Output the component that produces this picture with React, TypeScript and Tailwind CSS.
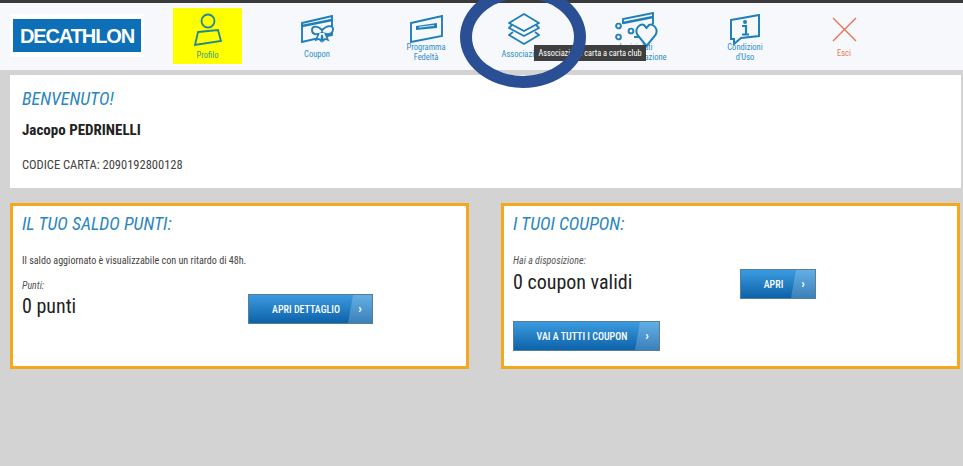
function NavItem({ label, icon, width, tone = "text-[#2f8fc7]", gap }: { label: React.ReactNode; icon: React.ReactNode; width: string; tone?: string; gap: string }) {
  return (
    <div className={`flex h-full shrink-0 flex-col items-center pt-[10px] text-center text-[8.5px] leading-[10px] ${width} ${tone}`}>
      <div className="flex h-[32px] items-center justify-center">{icon}</div>
      <div className={gap}>{label}</div>
    </div>
  );
}

function CouponIcon() {
  return (
    <svg width="33" height="28" viewBox="0 0 33 28" fill="none" stroke="#1f7fb8" strokeWidth="1.9">
      <path d="M1 8 L31 1 V20 L1 27 Z" />
      <path d="M1 11 L31 5" strokeWidth="2.8" />
      <path d="M21 15 C16 10 11 11 11 15 C11 20 16 20 21 18 C26 20 32 20 32 14 C32 10 26 10 21 15 Z" fill="#f6f8fb" />
      <path d="M21 15 V18 M18 18 L15 25 L18 24 L20 26 L21 20 L22 26 L24 24 L27 25 L24 18" fill="#f6f8fb" strokeWidth="1.6" />
    </svg>
  );
}

function CardIcon() {
  return (
    <svg width="33" height="28" viewBox="0 0 33 28" fill="none" stroke="#1f7fb8" strokeWidth="1.9">
      <path d="M1 8 L32 1 V21 L1 27 Z" />
      <path d="M6 11 L27 8 V13 L6 15 Z" fill="#1f7fb8" stroke="none" />
      <path d="M9 12.2 L24 10.4" stroke="#dcecf6" strokeWidth="1" />
    </svg>
  );
}

function LayersIcon() {
  return (
    <svg width="34" height="32" viewBox="0 0 34 32" fill="none" stroke="#1f7fb8" strokeWidth="1.8" strokeLinejoin="round">
      <path d="M17 1 L32 10 L17 18 L2 10 Z" />
      <path d="M5 12 L2 15 L17 23 L32 15 L29 12" />
      <path d="M6 19 L2 22 L17 31 L32 22 L28 19" />
      <path d="M9 14 L17 18 L25 14" strokeWidth="1" />
    </svg>
  );
}

function RewardIcon() {
  return (
    <svg width="43" height="35" viewBox="0 0 43 35" fill="none" stroke="#1f7fb8" strokeWidth="1.9">
      <path d="M8 12 V7 L38 1 V12" />
      <path d="M8 11 L38 5" strokeWidth="2.8" />
      <path d="M19 25 H24" />
      <circle cx="3.5" cy="14" r="2.4" />
      <circle cx="3.5" cy="25" r="2.4" />
      <circle cx="16" cy="19" r="2.4" />
      <path d="M31.5 34 L22.5 23 C19 17 25 11 29 13 L31.5 16 L34 13 C38 11 44 17 40.5 23 Z" fill="#f6f8fb" strokeWidth="2" />
    </svg>
  );
}

function InfoIcon() {
  return (
    <svg width="30" height="31" viewBox="0 0 30 31" fill="none" stroke="#1f7fb8" strokeWidth="2">
      <path d="M1 6 L29 1 V22 L11 24 L4 30 V25 H1 Z" />
      <circle cx="15" cy="8" r="2" fill="#1f7fb8" stroke="none" />
      <path d="M12 12 H16 V20 M12 20.5 H19" strokeWidth="2.2" />
    </svg>
  );
}

function Cta({ label, className }: { label: string; className: string }) {
  return (
    <div className={`relative flex h-[30px] items-center overflow-hidden border border-[#5a7d96] bg-gradient-to-b from-[#3b9be0] to-[#0a62a8] text-[10px] font-medium text-white ${className}`}>
      <span className="flex-1 pl-[15px] text-center">{label}</span>
      <span className="flex h-full w-[24px] items-center justify-center bg-white/20 [clip-path:polygon(5px_0,100%_0,100%_100%,0_100%)] text-[13px] font-bold">›</span>
    </div>
  );
}

export default function App() {
  return (
    <div className="relative h-[466px] w-[963px] overflow-hidden bg-[#d3d3d3] font-['Roboto_Condensed','Roboto',sans-serif] [font-stretch:75%]">
      <div className="h-[3px] bg-[#3a3a3a]" />
      <header className="flex h-[67px] items-start bg-[#f6f8fb]">
        <div className="ml-[10px] mt-[11px] bg-white px-[3px] py-[5px]">
          <div className="flex h-[33px] w-[128px] items-center justify-center bg-[#0d6fb8] font-['Liberation_Sans',sans-serif] text-[20px] font-bold tracking-[-1.1px] text-white">
            DECATHLON
          </div>
        </div>
        <div className="ml-[29px] mt-[5px] flex h-[56px] w-[69px] flex-col items-center bg-[#ffff00] pt-[5px] text-[8.5px] text-[#3a9a86]">
          <svg width="28" height="33" viewBox="0 0 28 33" fill="none" stroke="#1f8a8f" strokeWidth="1.8">
            <circle cx="14" cy="8" r="6.5" />
            <path d="M4 19 L24 17 L27 28 L1 32 Z" />
          </svg>
          <span className="mt-[3px]">Profilo</span>
        </div>
        <div className="ml-[20px] flex h-full">
          <NavItem width="w-[110px]" gap="mt-[4px]" label="Coupon" icon={<CouponIcon />} />
          <NavItem width="w-[108px]" gap="mt-[-3px]" label={<>Programma<br />Fedeltà</>} icon={<CardIcon />} />
          <NavItem width="w-[88px]" gap="mt-[4px]" label="Associazione" icon={<LayersIcon />} />
          <NavItem width="w-[136px]" gap="mt-[-3px]" label={<>I miei dati<br />Personalizzazione</>} icon={<RewardIcon />} />
          <NavItem width="w-[82px]" gap="mt-[-3px]" label={<>Condizioni<br />d'Uso</>} icon={<InfoIcon />} />
          <NavItem
            width="w-[116px]"
            gap="mt-[3px]"
            label="Esci"
            tone="text-[#e8795a]"
            icon={
              <svg width="25" height="25" viewBox="0 0 25 25" stroke="#e8704f" strokeWidth="1.3">
                <path d="M1 1 L24 24 M24 1 L1 24" />
              </svg>
            }
          />
        </div>
      </header>

      <main className="flex flex-col gap-[15px] pl-[10px] pr-[2px] pt-[5px]">
        <section className="h-[113px] bg-white px-[12px] pt-[13px]">
          <h2 className="text-[18px] leading-[22px] italic text-[#2a86c0]">BENVENUTO!</h2>
          <p className="mt-[10px] text-[15px] leading-[20px] font-bold text-[#222]">Jacopo PEDRINELLI</p>
          <p className="mt-[17px] text-[12.5px] leading-[16px] text-[#444]">CODICE CARTA: 2090192800128</p>
        </section>

        <div className="flex gap-[32px]">
          <section className="h-[166px] w-[459px] border-[3px] border-[#f6a81d] bg-white px-[9px] pt-[5px]">
            <h2 className="text-[18px] leading-[26px] italic text-[#2a86c0]">IL TUO SALDO PUNTI:</h2>
            <p className="mt-[17px] text-[10.1px] leading-[14px] text-[#444]">Il saldo aggiornato è visualizzabile con un ritardo di 48h.</p>
            <div className="mt-[12px] flex">
              <div className="w-[226px]">
                <p className="text-[10px] leading-[12px] italic text-[#555]">Punti:</p>
                <p className="mt-[2px] text-[20px] leading-[24px] text-[#222]">0 punti</p>
              </div>
              <Cta label="APRI DETTAGLIO" className="mt-[14px] w-[125px]" />
            </div>
          </section>

          <section className="h-[166px] w-[459px] border-[3px] border-[#f6a81d] bg-white px-[9px] pt-[5px]">
            <h2 className="text-[18px] leading-[26px] italic text-[#2a86c0]">I TUOI COUPON:</h2>
            <div className="mt-[18px] flex">
              <div className="w-[227px]">
                <p className="text-[10px] leading-[12px] italic text-[#555]">Hai a disposizione:</p>
                <p className="mt-[3px] text-[20px] leading-[24px] text-[#222]">0 coupon validi</p>
              </div>
              <Cta label="APRI" className="mt-[14px] w-[76px]" />
            </div>
            <Cta label="VAI A TUTTI I COUPON" className="mt-[22px] w-[147px]" />
          </section>
        </div>
      </main>

      {/* tooltip */}
      <div className="absolute left-[534px] top-[45px] flex h-[16px] w-[112px] items-center justify-center bg-[#3f3f3f] text-[8.3px] text-white">
        Associazione carta a carta club
      </div>

      {/* annotation circle drawn over the screenshot */}
      <div className="absolute left-[460px] top-[-14px] h-[102px] w-[126px] rounded-[50%] border-[12px] border-[#2a4f94]" />
    </div>
  );
}
